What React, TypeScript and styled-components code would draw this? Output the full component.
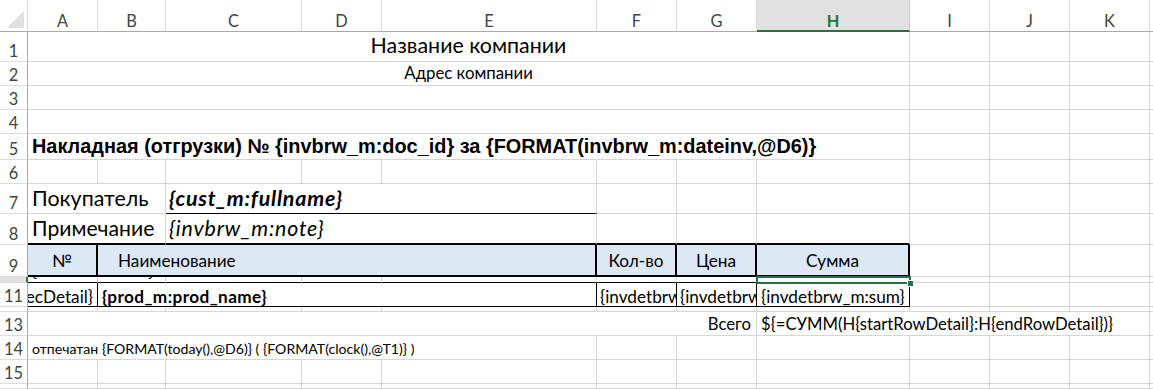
import React from 'react';
import styled, { createGlobalStyle, css } from 'styled-components';

const GRID = '#d6d6d6';
const HEAD_LINE = '#a8a8a8';
const GREEN = '#217346';
const FILL = '#dde8f5';
const BLACK1 = '1px solid #000';
const BLACK2 = '2px solid #000';

const GlobalStyle = createGlobalStyle`
  html, body {
    margin: 0;
    padding: 0;
    background: #fff;
  }
  body {
    font-family: Lato, "Noto Sans", sans-serif;
  }
`;

const Sheet = styled.div`
  width: 1153px;
  height: 389px;
  overflow: hidden;
  display: grid;
  grid-template-columns: 28px 70px 68px 136px 80px 215px 80px 80px 153px 80px 80px 80px 1fr;
  grid-template-rows: 32px 30px 24px 24px 24px 26px 24px 30px 31px 32px 6px 24px 5px 24px 24px 24px 1fr;
  color: #000;
  background: #fff;
`;

const Corner = styled.div`
  position: relative;
  border-right: 1px solid #dcdcdc;
  border-bottom: 1px solid ${HEAD_LINE};

  &::after {
    content: '';
    position: absolute;
    right: 3px;
    bottom: 3px;
    border-left: 17px solid transparent;
    border-bottom: 17px solid #dfdfdf;
  }
`;

const ColHead = styled.div<{ $active?: boolean }>`
  display: flex;
  align-items: flex-end;
  justify-content: center;
  padding-bottom: 2px;
  font-size: 16.4px;
  line-height: 1;
  color: #444;
  border-right: 1px solid #dcdcdc;
  border-bottom: 1px solid ${HEAD_LINE};

  ${(p) =>
    p.$active &&
    css`
      background: #e1e1e1;
      color: ${GREEN};
      font-weight: 700;
      padding-bottom: 1px;
      border-bottom: 2px solid ${GREEN};
      border-right-color: #c8c8c8;
    `}
`;

const RowHead = styled.div<{ $active?: boolean }>`
  display: flex;
  align-items: flex-end;
  justify-content: center;
  overflow: hidden;
  padding-bottom: 2px;
  font-size: 16.4px;
  line-height: 1;
  color: #444;
  border-right: 1px solid ${HEAD_LINE};
  border-bottom: 1px solid #dcdcdc;

  ${(p) =>
    p.$active &&
    css`
      background: #e1e1e1;
      border-right: 2px solid ${GREEN};
    `}
`;

interface CellProps {
  $span?: number;
  $size?: number;
  $bold?: boolean;
  $italic?: boolean;
  $arial?: boolean;
  $align?: 'left' | 'center' | 'right';
  $top?: boolean;
  $pb?: number;
  $pl?: number;
  $pr?: number;
  $ls?: number;
  $fill?: string;
  $right?: string;
  $bottom?: string;
  $clip?: boolean;
  $band?: boolean;
}

const Cell = styled.div<CellProps>`
  position: relative;
  grid-column: span ${(p) => p.$span ?? 1};
  display: flex;
  align-items: ${(p) => (p.$top ? 'flex-start' : 'flex-end')};
  justify-content: ${(p) =>
    p.$align === 'center' ? 'center' : p.$align === 'right' ? 'flex-end' : 'flex-start'};
  min-width: 0;
  padding: 0 ${(p) => p.$pr ?? 4}px ${(p) => p.$pb ?? 2}px ${(p) => p.$pl ?? 4}px;
  overflow: ${(p) => (p.$clip ? 'hidden' : 'visible')};
  white-space: nowrap;
  font-family: ${(p) => (p.$arial ? '"Liberation Sans", Arial, sans-serif' : 'Lato, "Noto Sans", sans-serif')};
  font-size: ${(p) => p.$size ?? 17.2}px;
  font-weight: ${(p) => (p.$bold ? 700 : 400)};
  font-style: ${(p) => (p.$italic ? 'italic' : 'normal')};
  letter-spacing: ${(p) => p.$ls ?? 0}px;
  line-height: 1;
  background: ${(p) => p.$fill ?? 'transparent'};
  border-right: ${(p) => p.$right ?? `1px solid ${GRID}`};
  border-bottom: ${(p) => p.$bottom ?? `1px solid ${GRID}`};

  ${(p) =>
    p.$band &&
    css`
      clip-path: inset(0 -400px 0 0);
      z-index: 1;
    `}
`;

const BandText = styled.span<{ $shift: number }>`
  margin-top: ${(p) => p.$shift}px;
`;

const Selection = styled.div`
  position: absolute;
  left: -1px;
  top: -1px;
  right: -2px;
  bottom: -2px;
  border: 2px solid ${GREEN};
  z-index: 3;
`;

const Handle = styled.div`
  position: absolute;
  right: -4px;
  bottom: -4px;
  width: 5px;
  height: 5px;
  background: ${GREEN};
  box-shadow: 0 0 0 1px #fff;
`;

const Blanks = ({ n, bottom }: { n: number; bottom?: string }) => (
  <>
    {Array.from({ length: n }).map((_, i) => (
      <Cell key={i} $bottom={bottom} />
    ))}
  </>
);

const columns = ['A', 'B', 'C', 'D', 'E', 'F', 'G', 'H', 'I', 'J', 'K', ''];

const App = () => (
  <>
    <GlobalStyle />
    <Sheet>
      <Corner />
      {columns.map((c, i) => (
        <ColHead key={i} $active={c === 'H'}>
          {c}
        </ColHead>
      ))}

      <RowHead>1</RowHead>
      <Cell $span={8} $align="center" $size={21.4} $pb={5}>
        Название компании
      </Cell>
      <Blanks n={4} />

      <RowHead>2</RowHead>
      <Cell $span={8} $align="center" $size={16.8} $pb={3}>
        Адрес компании
      </Cell>
      <Blanks n={4} />

      <RowHead>3</RowHead>
      <Cell $span={8} />
      <Blanks n={4} />

      <RowHead>4</RowHead>
      <Cell $span={8} />
      <Blanks n={4} />

      <RowHead>5</RowHead>
      <Cell $span={8} $arial $bold $size={19.9} $pb={2}>
        Накладная (отгрузки) № {'{invbrw_m:doc_id}'} за {'{FORMAT(invbrw_m:dateinv,@D6)}'}
      </Cell>
      <Blanks n={4} />

      <RowHead>6</RowHead>
      <Blanks n={12} />

      <RowHead>7</RowHead>
      <Cell $span={2} $size={21.4} $pb={4}>
        Покупатель
      </Cell>
      <Cell $span={3} $size={21.4} $pb={4} $pl={3} $ls={0.8} $bold $italic $bottom={BLACK1}>
        {'{cust_m:fullname}'}
      </Cell>
      <Blanks n={7} />

      <RowHead>8</RowHead>
      <Cell $span={2} $size={21.2} $pb={4} $bottom={BLACK2}>
        Примечание
      </Cell>
      <Cell $span={3} $size={21.4} $pb={4} $pl={3} $ls={0.8} $italic $bottom={BLACK2}>
        {'{invbrw_m:note}'}
      </Cell>
      <Blanks n={3} bottom={BLACK2} />
      <Blanks n={4} />

      <RowHead>9</RowHead>
      <Cell $align="center" $fill={FILL} $pb={6} $right={BLACK2} $bottom={BLACK2}>
        №
      </Cell>
      <Cell $span={4} $fill={FILL} $pb={6} $pl={20} $right={BLACK2} $bottom={BLACK2}>
        Наименование
      </Cell>
      <Cell $align="center" $fill={FILL} $pb={6} $right={BLACK2} $bottom={BLACK2}>
        Кол-во
      </Cell>
      <Cell $align="center" $fill={FILL} $pb={6} $right={BLACK2} $bottom={BLACK2}>
        Цена
      </Cell>
      <Cell $align="center" $fill={FILL} $pb={6} $right={BLACK2} $bottom={BLACK2}>
        Сумма
      </Cell>
      <Blanks n={4} />

      <RowHead $active />
      <Cell $band $size={17} $pb={3} $bottom={BLACK1}>
        {'{startRowDetail}'}
      </Cell>
      <Blanks n={6} bottom={BLACK1} />
      <Cell $bottom={BLACK1}>
        <Selection>
          <Handle />
        </Selection>
      </Cell>
      <Blanks n={4} />

      <RowHead>11</RowHead>
      <Cell $clip $align="right" $pb={1} $right={BLACK1} $bottom={BLACK1}>
        {'{numRecDetail}'}
      </Cell>
      <Cell $span={4} $bold $ls={0.4} $pb={1} $right={BLACK1} $bottom={BLACK1}>
        {'{prod_m:prod_name}'}
      </Cell>
      <Cell $clip $pl={3} $pb={1} $right={BLACK1} $bottom={BLACK1}>
        {'{invdetbrw_m:qty}'}
      </Cell>
      <Cell $clip $pl={3} $pb={1} $right={BLACK1} $bottom={BLACK1}>
        {'{invdetbrw_m:price}'}
      </Cell>
      <Cell $pb={1} $right={BLACK1} $bottom={BLACK1}>
        {'{invdetbrw_m:sum}'}
      </Cell>
      <Blanks n={4} />

      <RowHead />
      <Cell $band $top $size={17}>
        <BandText $shift={5}>{'{endRowDetail}'}</BandText>
      </Cell>
      <Blanks n={11} />

      <RowHead>13</RowHead>
      <Cell $span={7} $align="right" $size={16.7} $pr={5} $pb={2}>
        Всего
      </Cell>
      <Cell $span={4} $size={16.7} $pb={2}>
        {'${=СУММ(H{startRowDetail}:H{endRowDetail})}'}
      </Cell>
      <Blanks n={1} />

      <RowHead>14</RowHead>
      <Cell $span={5} $size={14.1} $pb={3}>
        отпечатан {'{FORMAT(today(),@D6)}'} ( {'{FORMAT(clock(),@T1)}'} )
      </Cell>
      <Blanks n={7} />

      <RowHead>15</RowHead>
      <Blanks n={12} />

      <RowHead>16</RowHead>
      <Blanks n={12} />
    </Sheet>
  </>
);

export default App;
